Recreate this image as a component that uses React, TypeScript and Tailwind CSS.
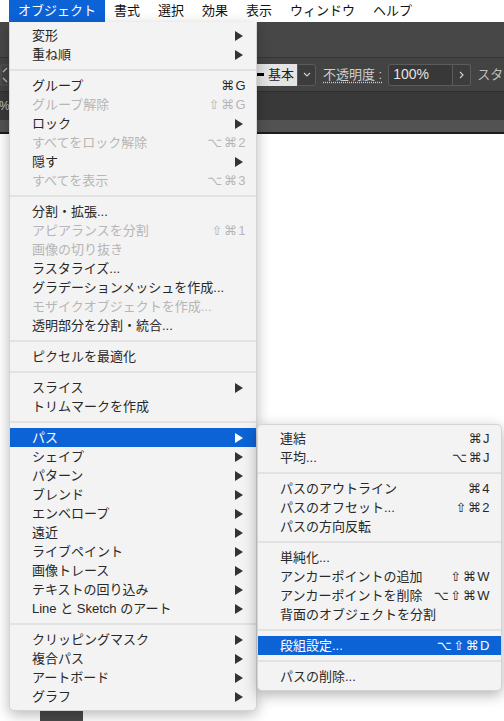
import React from "react";
import clsx from "clsx";

type MenuItem =
  | { sep: true }
  | {
      sep?: false;
      label: string;
      shortcut?: string;
      sub?: boolean;
      disabled?: boolean;
      active?: boolean;
    };

const mainItems: MenuItem[] = [
  { label: "変形", sub: true },
  { label: "重ね順", sub: true },
  { sep: true },
  { label: "グループ", shortcut: "⌘G" },
  { label: "グループ解除", shortcut: "⇧⌘G", disabled: true },
  { label: "ロック", sub: true },
  { label: "すべてをロック解除", shortcut: "⌥⌘2", disabled: true },
  { label: "隠す", sub: true },
  { label: "すべてを表示", shortcut: "⌥⌘3", disabled: true },
  { sep: true },
  { label: "分割・拡張..." },
  { label: "アピアランスを分割", shortcut: "⇧⌘1", disabled: true },
  { label: "画像の切り抜き", disabled: true },
  { label: "ラスタライズ..." },
  { label: "グラデーションメッシュを作成..." },
  { label: "モザイクオブジェクトを作成...", disabled: true },
  { label: "透明部分を分割・統合..." },
  { sep: true },
  { label: "ピクセルを最適化" },
  { sep: true },
  { label: "スライス", sub: true },
  { label: "トリムマークを作成" },
  { sep: true },
  { label: "パス", sub: true, active: true },
  { label: "シェイプ", sub: true },
  { label: "パターン", sub: true },
  { label: "ブレンド", sub: true },
  { label: "エンベロープ", sub: true },
  { label: "遠近", sub: true },
  { label: "ライブペイント", sub: true },
  { label: "画像トレース", sub: true },
  { label: "テキストの回り込み", sub: true },
  { label: "Line と Sketch のアート", sub: true },
  { sep: true },
  { label: "クリッピングマスク", sub: true },
  { label: "複合パス", sub: true },
  { label: "アートボード", sub: true },
  { label: "グラフ", sub: true },
];

const pathItems: MenuItem[] = [
  { label: "連結", shortcut: "⌘J" },
  { label: "平均...", shortcut: "⌥⌘J" },
  { sep: true },
  { label: "パスのアウトライン", shortcut: "⌘4" },
  { label: "パスのオフセット...", shortcut: "⇧⌘2" },
  { label: "パスの方向反転" },
  { sep: true },
  { label: "単純化..." },
  { label: "アンカーポイントの追加", shortcut: "⇧⌘W" },
  { label: "アンカーポイントを削除", shortcut: "⌥⇧⌘W" },
  { label: "背面のオブジェクトを分割" },
  { sep: true },
  { label: "段組設定...", shortcut: "⌥⇧⌘D", active: true },
  { sep: true },
  { label: "パスの削除..." },
];

const menuBar = ["オブジェクト", "書式", "選択", "効果", "表示", "ウィンドウ", "ヘルプ"];

function SubArrow({ white }: { white?: boolean }) {
  return (
    <svg width="8" height="10" viewBox="0 0 8 10" className="mr-[4px] shrink-0">
      <polygon points="0,0 8,5 0,10" fill={white ? "#ffffff" : "#333333"} />
    </svg>
  );
}

function MenuList({ items, padRight }: { items: MenuItem[]; padRight: string }) {
  return (
    <>
      {items.map((item, i) => {
        if (item.sep) {
          return (
            <div key={i} className="flex h-[12px] items-center">
              <div className="h-[2px] w-full bg-[#e2e2e2]" />
            </div>
          );
        }
        return (
          <div
            key={i}
            className={clsx(
              "flex h-[19px] items-center pl-[22px] leading-[19px] whitespace-nowrap",
              padRight,
              item.active && "bg-[#0c63d6] text-white",
              !item.active && (item.disabled ? "text-[#b6b6b6]" : "text-[#282828]")
            )}
          >
            <span className="flex-1">{item.label}</span>
            {item.shortcut && (
              <span className="font-['Liberation_Sans','DejaVu_Sans',sans-serif] tracking-[1.5px]">
                {item.shortcut}
              </span>
            )}
            {item.sub && <SubArrow white={item.active} />}
          </div>
        );
      })}
    </>
  );
}

export default function App() {
  return (
    <div className="relative flex h-[721px] w-full flex-col overflow-hidden bg-white font-['Liberation_Sans','Noto_Sans_CJK_JP',sans-serif] text-[13px]">
      {/* macOS menu bar */}
      <div className="flex h-[22px] shrink-0 items-center bg-white pl-[9px] leading-[22px] text-[#111]">
        {menuBar.map((m, i) => (
          <span
            key={m}
            className={clsx("px-[9px] whitespace-nowrap", i === 0 && "bg-[#0c63d6] text-white")}
          >
            {m}
          </span>
        ))}
      </div>

      {/* app chrome */}
      <div className="h-[35px] shrink-0 bg-[#474747]" />
      <div className="h-[1px] shrink-0 bg-[#363636]" />
      <div className="flex h-[33px] shrink-0 items-center bg-[#434343]">
        <svg width="9" height="22" viewBox="0 0 9 22" className="shrink-0">
          <path d="M3 8 L7 4" stroke="#bbb" strokeWidth="1.2" fill="none" />
          <path d="M3 14 L7 18" stroke="#bbb" strokeWidth="1.2" fill="none" />
          <path d="M9 1 L1 1 L1 21 L9 21" stroke="#5a5a5a" fill="none" />
        </svg>
        <div className="ml-[246px] flex h-[22px] w-[42px] shrink-0 items-center bg-[#e4e4e4]">
          <span className="ml-[2px] h-[3px] w-[7px] bg-black" />
          <span className="ml-[4px] text-[#222]">基本</span>
        </div>
        <div className="flex h-[22px] w-[19px] shrink-0 items-center justify-center rounded-r-[3px] border border-[#5a5a5a] bg-[#3c3c3c]">
          <svg width="8" height="5" viewBox="0 0 8 5">
            <path d="M1 1 L4 4 L7 1" stroke="#ccc" strokeWidth="1.2" fill="none" />
          </svg>
        </div>
        <span className="ml-[7px] whitespace-nowrap text-[#cfcfcf] underline decoration-dotted underline-offset-[3px]">
          不透明度 :
        </span>
        <div className="ml-[6px] flex h-[22px] w-[65px] shrink-0 items-center rounded-l-[3px] border border-[#5c5c5c] bg-[#383838] pl-[4px] text-[14px] text-[#e4e4e4]">
          100%
        </div>
        <div className="flex h-[22px] w-[18px] shrink-0 items-center justify-center rounded-r-[3px] border border-l-0 border-[#5c5c5c] bg-[#3c3c3c]">
          <svg width="5" height="8" viewBox="0 0 5 8">
            <path d="M1 1 L4 4 L1 7" stroke="#ccc" strokeWidth="1.2" fill="none" />
          </svg>
        </div>
        <span className="ml-[6px] whitespace-nowrap text-[#bdbdbd]">スタイル</span>
      </div>
      <div className="h-[1px] shrink-0 bg-[#2f2f2f]" />
      <div className="flex h-[28px] shrink-0 items-center bg-[#393939] text-[12px] text-[#c8c8c8]">
        <span className="-ml-[1px]">%</span>
      </div>
      <div className="h-[12px] shrink-0 bg-[#525252]" />
      <div className="h-[2px] shrink-0 bg-[#1c1c1c]" />

      {/* canvas */}
      <div className="flex flex-1 flex-col justify-end pl-[40px]">
        <div className="h-[30px] w-[43px] bg-[#4a4a4a]" />
      </div>

      {/* オブジェクト menu */}
      <div className="absolute left-[9px] top-[22px] w-[248px] rounded-b-[5px] border border-t-0 border-[#d4d4d4] bg-[#f3f3f3] py-[4px] shadow-[0_4px_14px_rgba(0,0,0,0.28)]">
        <MenuList items={mainItems} padRight="pr-[9px]" />
      </div>

      {/* パス submenu */}
      <div className="absolute left-[257px] top-[424px] w-[245px] rounded-[5px] border border-[#d4d4d4] bg-[#f3f3f3] py-[4px] shadow-[0_4px_14px_rgba(0,0,0,0.3)]">
        <MenuList items={pathItems} padRight="pr-[10px]" />
      </div>
    </div>
  );
}
